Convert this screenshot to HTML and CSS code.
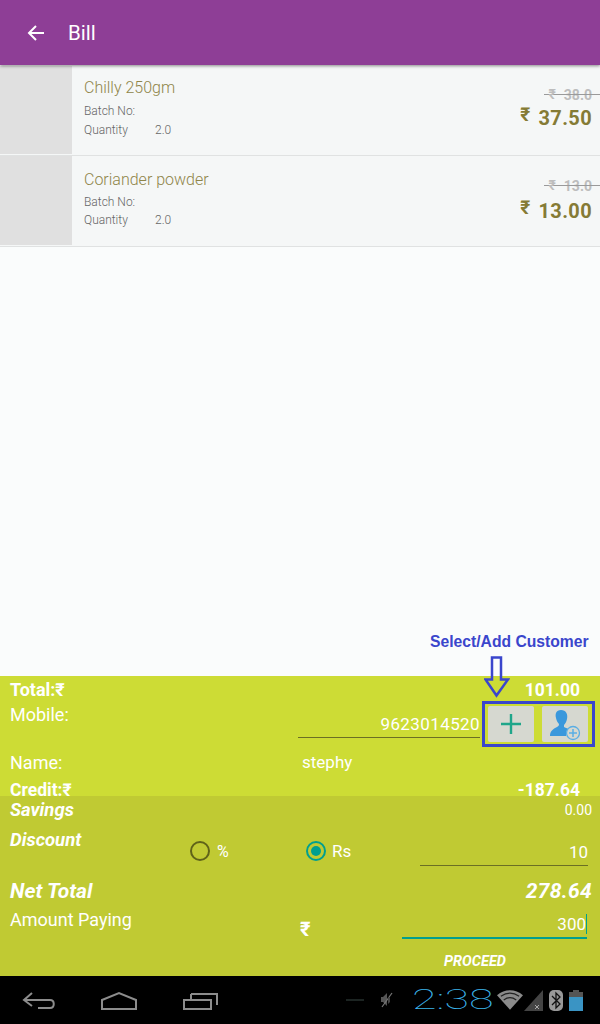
FILE: index.html
```html
<!DOCTYPE html>
<html lang="en">
<head>
<meta charset="utf-8">
<title>Bill</title>
<link rel="stylesheet" href="styles.css">
</head>
<body>
<div class="screen">
  <header class="appbar">
    <svg class="back" width="18" height="18" viewBox="0 0 18 18"><path d="M17 9H2M9 2L2 9l7 7" fill="none" stroke="#fff" stroke-width="2"/></svg>
    <span class="appbar-title">Bill</span>
  </header>

  <main class="list">
    <article class="item">
      <div class="thumb"></div>
      <div class="info">
        <div class="name">Chilly 250gm</div>
        <div class="meta">Batch No:</div>
        <div class="meta qty"><span class="qty-label">Quantity</span><span>2.0</span></div>
      </div>
      <div class="prices">
        <div class="old"><span class="strike"></span><span class="old-sym">₹</span><span>38.0</span></div>
        <div class="new"><span class="new-sym">₹</span><span>37.50</span></div>
      </div>
    </article>
    <article class="item">
      <div class="thumb"></div>
      <div class="info">
        <div class="name">Coriander powder</div>
        <div class="meta">Batch No:</div>
        <div class="meta qty"><span class="qty-label">Quantity</span><span>2.0</span></div>
      </div>
      <div class="prices">
        <div class="old"><span class="strike"></span><span class="old-sym">₹</span><span>13.0</span></div>
        <div class="new"><span class="new-sym">₹</span><span>13.00</span></div>
      </div>
    </article>
  </main>

  <section class="summary">
    <div class="callout">Select/Add Customer</div>
    <svg class="callout-arrow" width="26" height="42" viewBox="0 0 26 42"><path d="M8 1.500h9v22h7L12.500 39.500 1.500 23.500h6.500z" fill="none" stroke="#3a46cc" stroke-width="2.500"/></svg>
    <div class="customer">
      <div class="row-total strong">
        <span class="strong-label">Total:₹</span><span>101.00</span>
      </div>
      <div class="row-mobile">
        <span class="label">Mobile:</span>
        <div class="mobile-input">9623014520</div>
        <div class="actions">
          <button class="act" type="button"><svg width="22" height="22" viewBox="0 0 22 22"><path d="M11 1v20M1 11h20" stroke="#1fa68a" stroke-width="2.400"/></svg></button>
          <button class="act" type="button"><svg width="40" height="36" viewBox="0 0 40 36"><path d="M16 4c5 0 7 4 6 9-.5 3-2 5-3 6v2c2 1 4 1.500 5 2.500-2 1-3 3-3 6.500H5c0-5 3-7 7-9 1-.5 2-1 2-3-1-1-2.500-3-3-6-1-4 0-8 5-8z" fill="#3a98dc"/><circle cx="28" cy="27" r="6.500" fill="#d6d8d0" stroke="#5aaee4" stroke-width="1.300"/><path d="M28 23v8M24 27h8" stroke="#5aaee4" stroke-width="1.500"/></svg></button>
        </div>
      </div>
      <div class="row-name">
        <span class="label name-label">Name:</span><span class="name-value">stephy</span>
      </div>
      <div class="row-credit strong">
        <span>Credit:₹</span><span>-187.64</span>
      </div>
    </div>

    <div class="payment">
      <div class="row-savings">
        <span class="emph">Savings</span><span class="small">0.00</span>
      </div>
      <div class="row-discount">
        <span class="emph discount-label">Discount</span>
        <label class="choice"><span class="radio"></span><span class="choice-pct">%</span></label>
        <label class="choice choice-rs"><span class="radio on"></span><span>Rs</span></label>
        <div class="field discount-field">10</div>
      </div>
      <div class="row-net">
        <span>Net Total</span><span class="net-value">278.64</span>
      </div>
      <div class="row-paying">
        <span class="label paying-label">Amount Paying</span>
        <span class="rupee">₹</span>
        <div class="field paying-field"><span>300</span><span class="caret"></span></div>
      </div>
      <div class="row-proceed">PROCEED</div>
    </div>
  </section>

  <footer class="sysbar">
    <div class="nav">
      <svg width="34" height="20" viewBox="0 0 34 20"><path d="M10 2L2 9l8 6M2 9h26c5 0 5 8 0 8H16" fill="none" stroke="#8c8c8c" stroke-width="2"/></svg>
      <svg width="38" height="20" viewBox="0 0 38 20"><path d="M2 9L19 2l17 7v9H2z" fill="none" stroke="#8c8c8c" stroke-width="2"/></svg>
      <svg class="nav-recent" width="36" height="20" viewBox="0 0 36 20"><path d="M1 9h27v9H1zM8 3h26v11" fill="none" stroke="#8c8c8c" stroke-width="2"/><path d="M8 3v5" stroke="#8c8c8c" stroke-width="2" fill="none"/></svg>
    </div>
    <div class="status">
      <span class="dash"></span>
      <svg class="mute" width="14" height="16" viewBox="0 0 14 16"><path d="M7 1L3 5H1v5h2l4 4z" fill="#555"/><path d="M2 15L12 1" stroke="#777" stroke-width="1.200"/><path d="M8 5l2 1v4l-2 2" fill="#444"/></svg>
      <span class="clock"><span class="clock-text">2:38</span></span>
      <svg class="wifi" width="26" height="22" viewBox="0 0 27 22"><path d="M13.500 21L0 6c8-7 19-7 27 0z" fill="#8a8a8a"/><path d="M4 7c6-4 13-4 19 0M7 11c4-3 9-3 13 0" fill="none" stroke="#222" stroke-width="1.200"/></svg>
      <svg class="signal" width="19" height="21" viewBox="0 0 19 21"><path d="M19 0v21H0z" fill="#444"/><path d="M11 15l4 4M15 15l-4 4" stroke="#aaa" stroke-width="1"/></svg>
      <svg class="bt" width="14" height="21" viewBox="0 0 14 21"><rect width="14" height="21" rx="5" fill="#999"/><path d="M3 6l8 8-4 4V3l4 4-8 8" fill="none" stroke="#111" stroke-width="1.300"/></svg>
      <svg class="battery" width="14" height="21" viewBox="0 0 14 21"><path d="M4 0h6v2h4v5H0V2h4z" fill="#555"/><rect y="7" width="14" height="14" fill="#3a94c4"/></svg>
    </div>
  </footer>
</div>
</body>
</html>
```
FILE: styles.css
```css
* { box-sizing: border-box; }
html, body { margin: 0; padding: 0; }
body { background: #fafcfc; font-family: Roboto, "Noto Sans", sans-serif; }
.screen { width: 600px; height: 1024px; display: flex; flex-direction: column; overflow: hidden; }

.appbar { height: 65px; flex: none; background: #8e3e96; display: flex; align-items: center; padding-left: 27px; box-shadow: 0 1px 3px rgba(0,0,0,.45); position: relative; z-index: 1; color: #fff; }
.back { flex: none; }
.appbar-title { margin-left: 23px; font-size: 20.500px; font-weight: 400; }

.list { flex: 1; }
.item { height: 91px; display: flex; background: #f5f7f7; border-bottom: 1px solid #e0e2e2; }
.item:first-child { padding-top: 1px; }
.thumb { width: 72px; background: #e0e0e0; flex: none; margin-bottom: 1px; }
.info { flex: 1; padding: 12px 0 0 12px; }
.item + .item .info { padding-top: 14px; }
.name { font-size: 16px; font-weight: 300; color: #8f8549; line-height: 19px; margin-bottom: 5px; }
.item + .item .name { margin-bottom: 4px; }
.meta { font-size: 12px; font-weight: 300; color: #666; line-height: 19px; }
.item + .item .qty { margin-top: -1px; }
.qty { display: flex; }
.qty-label { width: 71px; }
.prices { width: 100px; padding: 19px 8px 0 0; display: flex; flex-direction: column; align-items: flex-end; }
.item + .item .prices { padding-top: 20px; }
.old { position: relative; display: flex; gap: 8px; font-size: 14px; font-weight: 700; color: #bdbdbd; line-height: 20px; }
.old-sym { font-size: 14px; position: relative; top: -1px; }
.strike { position: absolute; left: -4px; right: -8px; top: 9px; height: 1px; background: #9a9a9a; }
.new { display: flex; gap: 8px; font-size: 20px; font-weight: 700; color: #857b35; line-height: 28px; margin-top: -1px; letter-spacing: .35px; }
.item + .item .new { margin-top: 1px; }
.new-sym { font-size: 19px; position: relative; top: -3px; }

.summary { flex: none; position: relative; color: #fff; }
.callout { position: absolute; left: 430px; top: -43px; font-family: "Liberation Sans", Arial, sans-serif; font-weight: 700; font-size: 15.700px; line-height: 18px; color: #3a46cc; white-space: nowrap; }
.callout-arrow { position: absolute; left: 484px; top: -20px; z-index: 2; }

.customer { height: 120px; background: #cddc35; overflow: hidden; }
.strong { font-weight: 700; font-size: 17.500px; }
.strong-label { font-size: 18px; }
.label { font-size: 18px; font-weight: 400; }
.row-total { height: 24px; display: flex; justify-content: space-between; align-items: center; padding: 3px 20px 0 10px; }
.row-mobile { height: 48px; display: flex; }
.row-mobile .label { width: 298px; line-height: 20px; padding: 5px 0 0 10px; }
.mobile-input { width: 182px; height: 38px; border-bottom: 1px solid #6b6f24; text-align: right; font-size: 17px; line-height: 20px; padding-top: 14px; letter-spacing: .4px; }
.actions { margin: 1px 0 0 2px; width: 113px; height: 46px; border: 3px solid #3a46cc; display: flex; gap: 8px; padding: 2px 3px; }
.act { width: 46px; height: 36px; margin: 0; padding: 0; border: 0; border-radius: 2px; background: #d6d8d0; display: flex; align-items: center; justify-content: center; }
.row-name { height: 28px; display: flex; align-items: center; padding-left: 10px; }
.name-label { width: 292px; }
.name-value { font-size: 17px; }
.row-credit { height: 26px; display: flex; justify-content: space-between; padding: 4px 20px 0 10px; line-height: 20px; }

.payment { height: 180px; background: #c0ca33; }
.emph { font-style: italic; font-weight: 700; font-size: 18.500px; }
.small { font-size: 14px; }
.row-savings { height: 30px; display: flex; justify-content: space-between; align-items: center; padding: 0 8px 2px 10px; }
.row-discount { height: 50px; display: grid; grid-template-columns: 180px 116px 114px 168px; padding-left: 10px; }
.discount-label { line-height: 20px; padding-top: 4px; }
.choice { display: flex; align-items: center; gap: 7px; font-size: 17px; height: 50px; }
.choice-rs { gap: 6px; }
.choice-pct { font-size: 16px; }
.radio { width: 20px; height: 20px; border: 2px solid #5f6319; border-radius: 50%; flex: none; display: flex; align-items: center; justify-content: center; }
.radio.on { border-color: #009f8f; }
.radio.on::before { content: ""; width: 10px; height: 10px; border-radius: 50%; background: #009f8f; }
.field { text-align: right; font-size: 17px; }
.discount-field { height: 40px; border-bottom: 1px solid #6b6f24; line-height: 20px; padding-top: 16px; }
.row-net { height: 30px; display: flex; justify-content: space-between; align-items: center; padding: 0 8px 0 10px; font-style: italic; font-weight: 700; font-size: 21px; }
.net-value { letter-spacing: .3px; }
.row-paying { height: 40px; display: flex; position: relative; }
.paying-label { width: 300px; padding: 4px 0 0 10px; line-height: 20px; }
.rupee { width: 102px; padding-top: 13px; line-height: 20px; font-weight: 700; font-size: 20px; }
.paying-field { width: 185px; height: 33px; border-bottom: 2px solid #009f8f; display: flex; justify-content: flex-end; line-height: 20px; padding-top: 8px; }
.caret { width: 1px; height: 20px; background: #009f8f; }
.row-proceed { height: 30px; padding: 6px 0 0 444px; font-style: italic; font-weight: 700; font-size: 14.500px; line-height: 20px; }

.sysbar { height: 48px; flex: none; background: #000; display: flex; justify-content: space-between; align-items: center; }
.nav { display: flex; gap: 44px; padding: 2px 0 0 22px; }
.nav-recent { margin-left: 1px; }
.status { display: flex; align-items: center; padding-right: 17px; }
.dash { width: 18px; height: 2px; background: #1c2422; }
.mute { margin-left: 16px; }
.clock { width: 80px; margin-left: 18px; display: block; overflow: visible; }
.clock-text { display: block; font-size: 28px; line-height: 32px; font-weight: 100; color: #3cb6ec; transform: scaleX(1.6); transform-origin: left center; white-space: nowrap; }
.wifi { margin-left: 5px; }
.signal { margin-left: 1px; }
.bt { margin-left: 6px; }
.battery { margin-left: 6px; }
```
